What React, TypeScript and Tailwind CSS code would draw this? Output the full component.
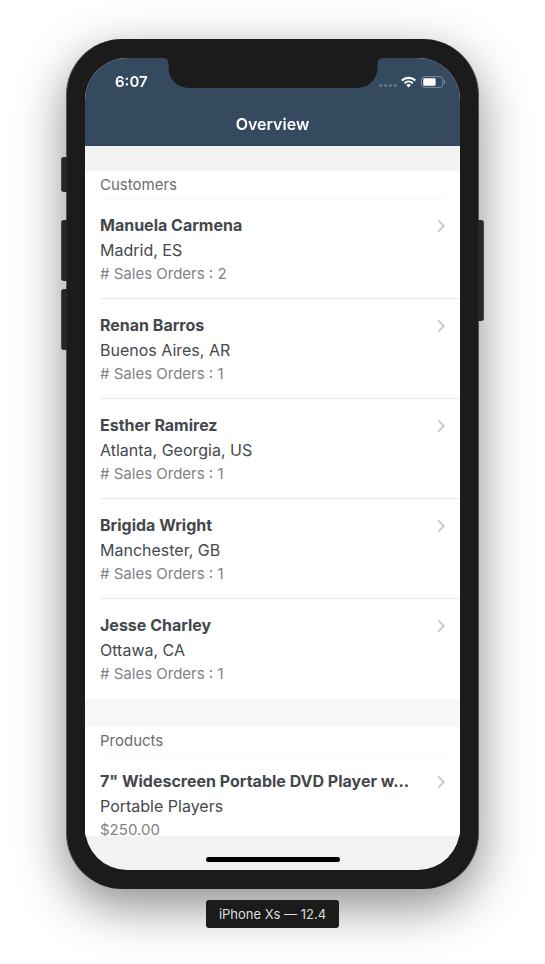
type Entry = { title: string; subtitle: string; detail: string };

const customers: Entry[] = [
  { title: "Manuela Carmena", subtitle: "Madrid, ES", detail: "# Sales Orders : 2" },
  { title: "Renan Barros", subtitle: "Buenos Aires, AR", detail: "# Sales Orders : 1" },
  { title: "Esther Ramirez", subtitle: "Atlanta, Georgia, US", detail: "# Sales Orders : 1" },
  { title: "Brigida Wright", subtitle: "Manchester, GB", detail: "# Sales Orders : 1" },
  { title: "Jesse Charley", subtitle: "Ottawa, CA", detail: "# Sales Orders : 1" },
];

const products: Entry[] = [
  { title: '7" Widescreen Portable DVD Player w...', subtitle: "Portable Players", detail: "$250.00" },
];

function Chevron() {
  return (
    <svg className="mt-1.5 shrink-0" width="8" height="14" viewBox="0 0 8 14" fill="none" aria-hidden="true">
      <path d="M1 1.2 6.8 7 1 12.8" stroke="#c7c7cb" strokeWidth="1.8" />
    </svg>
  );
}

function Section({ title, entries }: { title: string; entries: Entry[] }) {
  return (
    <section className="bg-white pl-[15px]">
      <h2 className="mr-[15px] border-b border-[#f8f8f8] text-[15px] leading-[27px] text-[#6a6d70]">{title}</h2>
      <ul>
        {entries.map((entry) => (
          <li key={entry.title} className="border-b border-[#e9e9e9] last:border-transparent">
            <a href="#" className="flex items-start justify-between pt-3.5 pr-[15px] pb-[13px]">
              <span className="flex min-w-0 flex-col">
                <span className="truncate text-base leading-[25px] font-bold text-[#44474b]">{entry.title}</span>
                <span className="truncate text-base leading-[25px] text-[#46494d]">{entry.subtitle}</span>
                <span className="truncate text-[15px] leading-[22px] text-[#7f8285]">{entry.detail}</span>
              </span>
              <Chevron />
            </a>
          </li>
        ))}
      </ul>
    </section>
  );
}

function StatusIcons() {
  return (
    <svg width="68" height="12" viewBox="0 0 68 12" fill="none" aria-hidden="true">
      <g fill="#637487">
        <circle cx="2.8" cy="9.4" r="1.7" />
        <circle cx="7.6" cy="9.4" r="1.7" />
        <circle cx="12.4" cy="9.4" r="1.7" />
        <circle cx="17.2" cy="9.4" r="1.7" />
      </g>
      <path d="M23.8 4.5a10 10 0 0 1 13.6 0" stroke="#fff" strokeWidth="2.2" />
      <path d="M26.4 7.2a6.2 6.2 0 0 1 8.4 0" stroke="#fff" strokeWidth="2" />
      <path d="M28.3 9.1a3.3 3.3 0 0 1 4.6 0L30.6 11.4Z" fill="#fff" />
      <rect x="43.5" y="0.6" width="21.4" height="10.8" rx="2.8" stroke="#7f8d9b" />
      <rect x="45.2" y="2.2" width="12.4" height="7.6" rx="1.3" fill="#fff" />
      <path d="M66 4c1.8.5 1.8 3.5 0 4Z" fill="#7f8d9b" />
    </svg>
  );
}

function Notch() {
  return (
    <svg className="absolute top-0 left-1/2 -translate-x-1/2" width="221" height="31" viewBox="0 0 221 31" aria-hidden="true">
      <path d="M0 0C4 0 6 2 6 6V9C6 21 14 30 28 30H193C207 30 215 21 215 9V6C215 2 217 0 221 0Z" fill="#1b1b1b" />
    </svg>
  );
}

export default function App() {
  return (
    <div className="flex min-h-screen flex-col items-center overflow-hidden bg-white px-8 pt-[39px] pb-9 font-['Inter','Liberation_Sans',sans-serif]">
      <div className="relative w-full max-w-[413px]">
        <div className="relative rounded-[56px] border-x border-[#555] bg-[#1b1b1b] px-[18px] py-[19px] shadow-[0_17px_50px_rgba(0,0,0,0.46)]">
          <main className="relative overflow-hidden rounded-[42px] bg-[#f2f2f2]">
            <header className="bg-[#354a5f] text-white">
              <div className="flex h-11 items-center justify-between pt-[3px] pr-3.5 pl-[30px]">
                <time className="text-[15px] leading-5 font-semibold">6:07</time>
                <StatusIcons />
              </div>
              <h1 className="text-center text-base leading-[44px] font-semibold">Overview</h1>
            </header>
            <Notch />
            <div className="flex max-h-[690px] flex-col gap-7 overflow-y-auto bg-[#f7f7f7] [scrollbar-width:none]">
              <div className="shrink-0 border-t-[25px] border-[#f2f2f2]">
                <Section title="Customers" entries={customers} />
              </div>
              <div className="shrink-0">
                <Section title="Products" entries={products} />
              </div>
            </div>
            <div className="flex h-[34px] items-end justify-center pb-2">
              <div className="h-[5px] w-[134px] rounded-full bg-black" />
            </div>
          </main>
        </div>

        <div className="absolute top-[118px] -left-[5px] h-[35px] w-1.5 rounded-l-[3px] border-l border-[#444] bg-[#272727]" />
        <div className="absolute top-[181px] -left-[5px] h-[61px] w-1.5 rounded-l-[3px] border-l border-[#444] bg-[#272727]" />
        <div className="absolute top-[250px] -left-[5px] h-[61px] w-1.5 rounded-l-[3px] border-l border-[#444] bg-[#272727]" />
        <div className="absolute top-[181px] -right-[5px] h-[101px] w-1.5 rounded-r-[3px] border-r border-[#444] bg-[#272727]" />
      </div>
      <p className="relative mt-[11px] rounded-[3px] bg-[#1b1b1b] px-[13px] text-[13px] leading-7 text-[#dedede]">iPhone Xs — 12.4</p>
    </div>
  );
}
